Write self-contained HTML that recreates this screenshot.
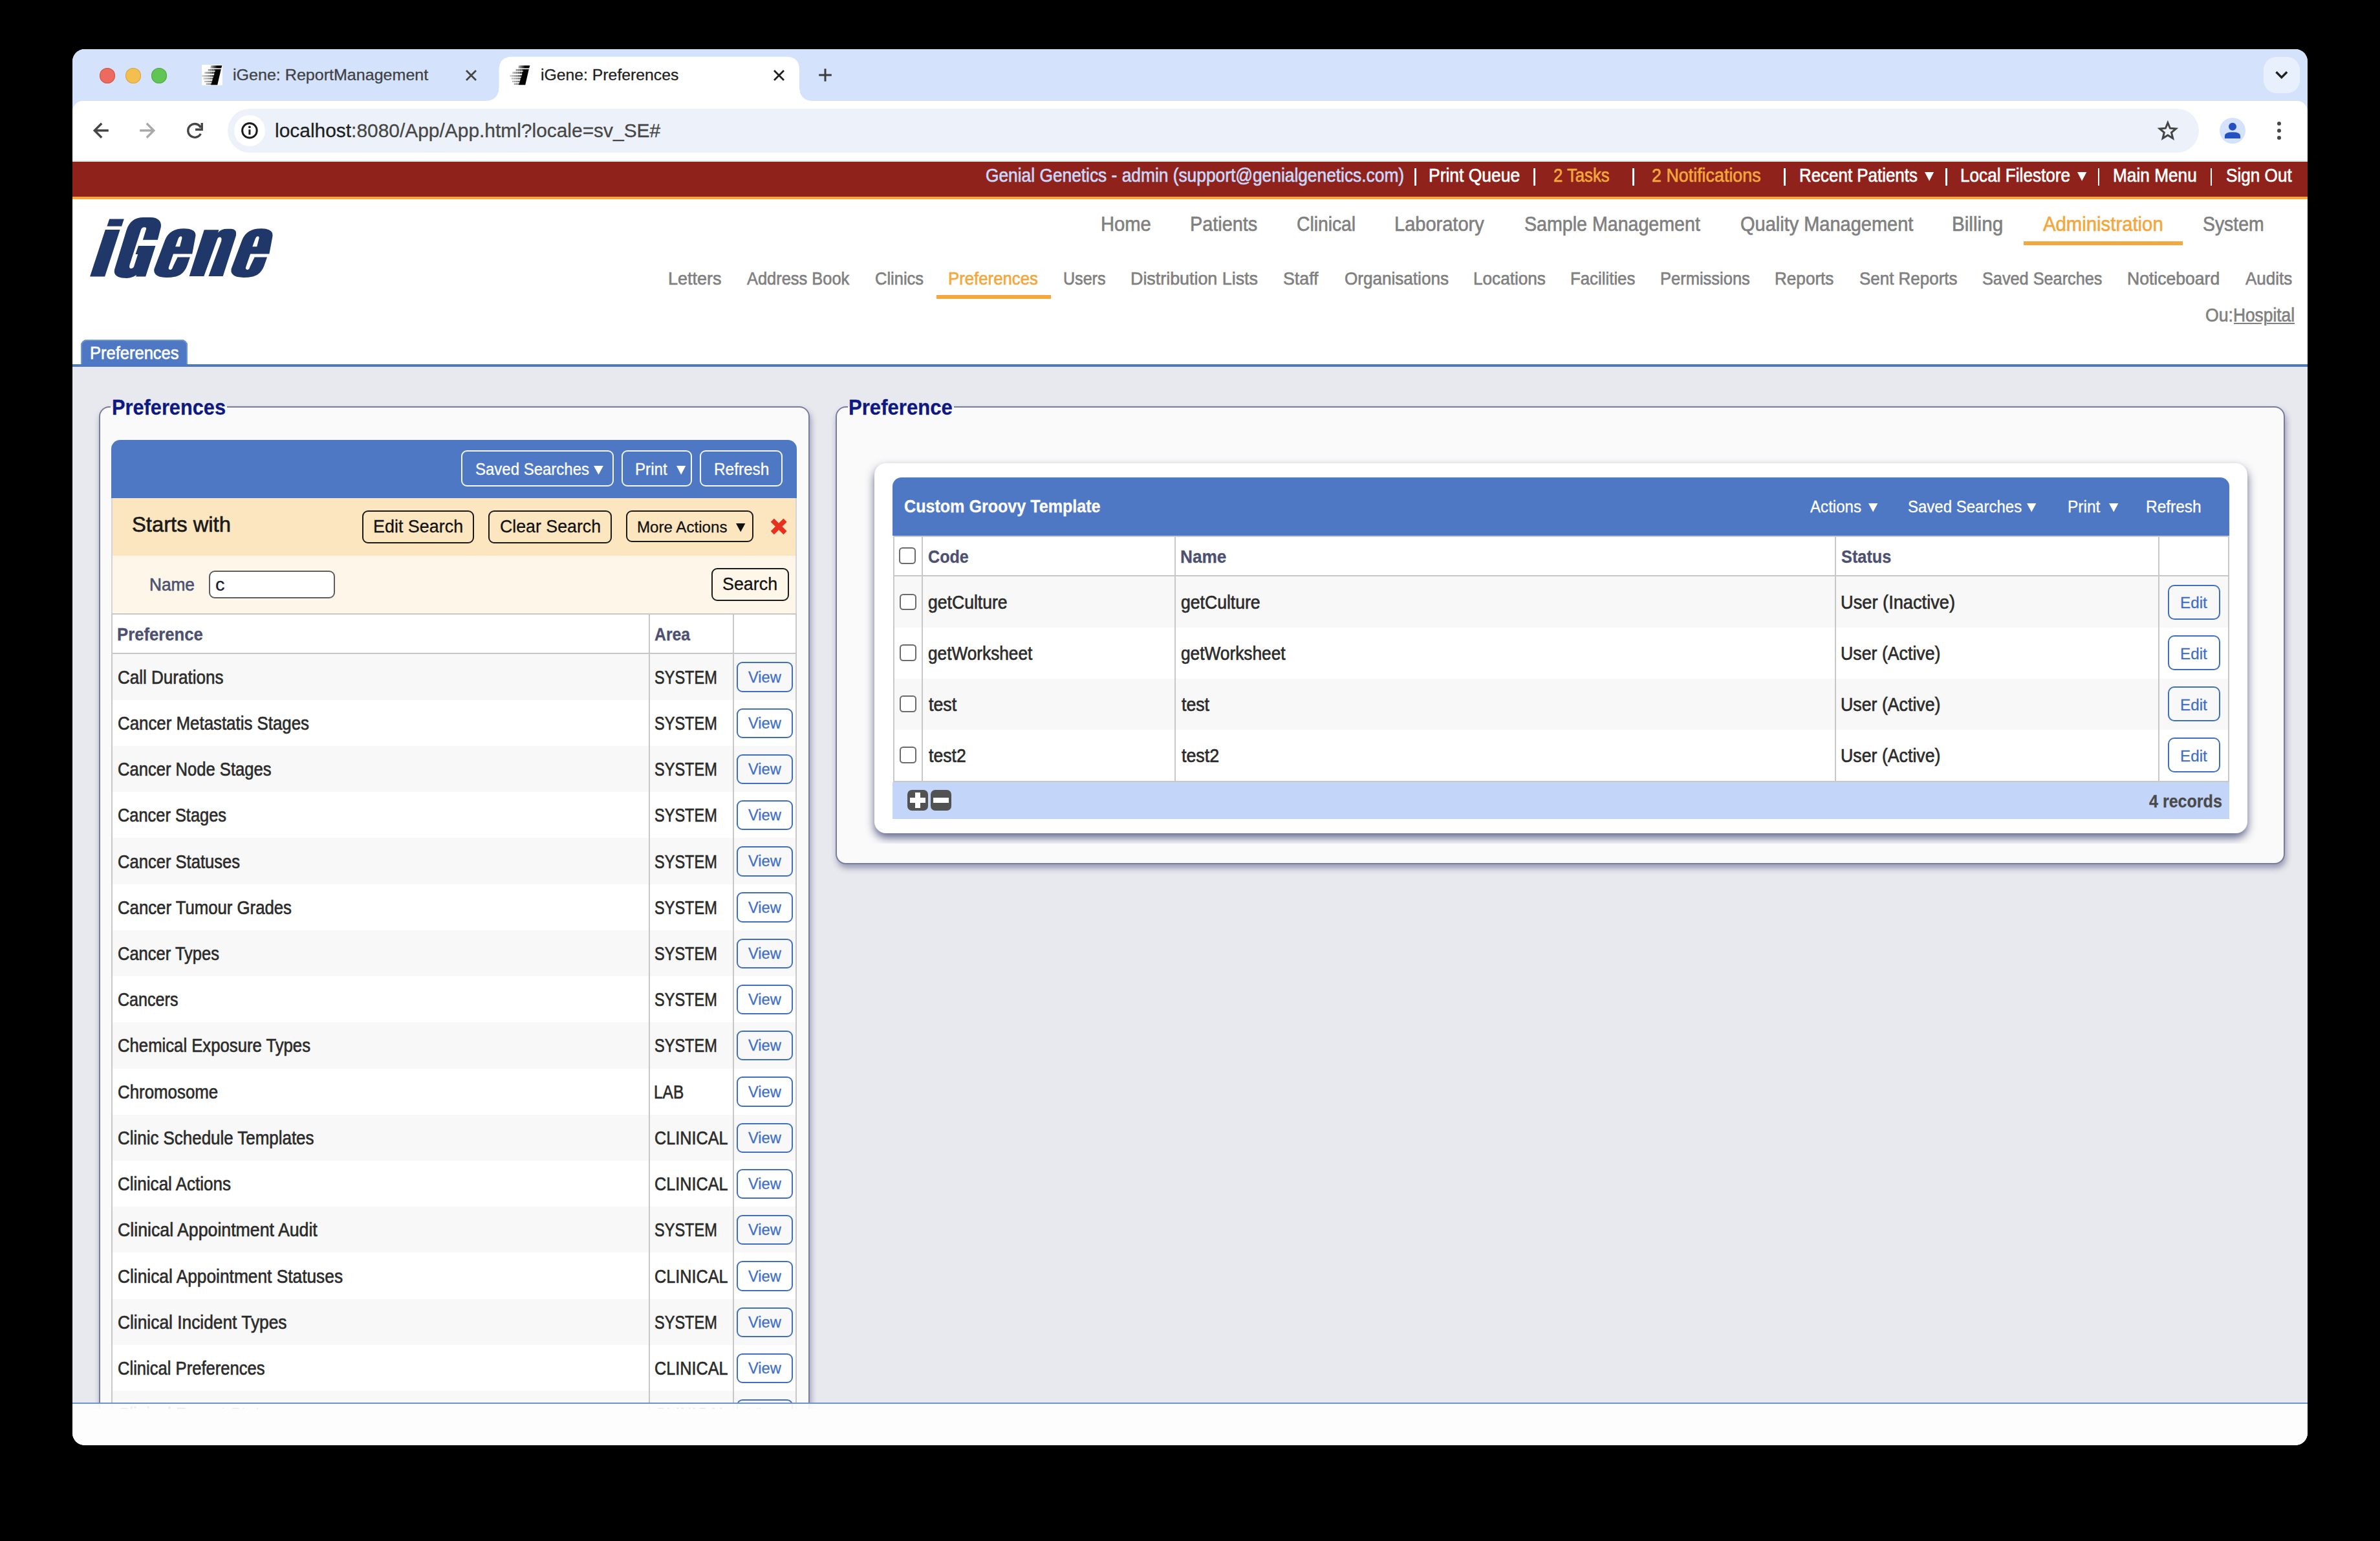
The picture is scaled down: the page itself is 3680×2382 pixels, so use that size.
<!DOCTYPE html>
<html><head><meta charset="utf-8"><title>iGene: Preferences</title><style>
html,body{margin:0;padding:0;background:#000;}
body{width:3680px;height:2382px;position:relative;overflow:hidden;font-family:"Liberation Sans",sans-serif;}
#w{position:absolute;left:0;top:0;width:3680px;height:2382px;clip-path:inset(76px 112px 148px 112px round 19px);background:#fff;}
#w div,#w svg{position:absolute;}
#w svg{overflow:visible;}
.t{white-space:nowrap;line-height:1;transform-origin:0 50%;-webkit-text-stroke:0.3px currentColor;}
</style></head><body><div id="w">
<div style="left:112px;top:76px;width:3456px;height:100px;background:#d4e2fc"></div>
<svg style="left:740px;top:80px" width="530" height="80" viewBox="740 80 530 80">
<path d="M750,156 Q771.6,156 771.6,134 L771.6,108 Q771.6,87.7 792,87.7 L1216,87.7 Q1236,87.7 1236,108 L1236,134 Q1236,156 1258,156 Z" fill="#fff"/></svg>
<div style="left:112px;top:155.5px;width:3456px;height:93px;background:#fff;border-radius:16px 16px 0 0"></div>
<div style="left:112px;top:248px;width:3456px;height:2px;background:#e3e9e8"></div>
<div style="left:154px;top:104.8px;width:24px;height:24px;background:#ed6a5e;border-radius:50%;box-shadow:inset 0 0 0 1px #d05549"></div>
<div style="left:194px;top:104.8px;width:24px;height:24px;background:#f5bf4f;border-radius:50%;box-shadow:inset 0 0 0 1px #d6a243"></div>
<div style="left:234px;top:104.8px;width:24px;height:24px;background:#61c554;border-radius:50%;box-shadow:inset 0 0 0 1px #52a73f"></div>
<svg style="left:312px;top:100px" width="32" height="32" viewBox="0 0 32 32"><defs><linearGradient id="fg1" gradientUnits="userSpaceOnUse" x1="0" x2="22" y1="0" y2="0"><stop offset="0" stop-color="#000" stop-opacity="0.15"/><stop offset=".5" stop-color="#000" stop-opacity=".45"/><stop offset="1" stop-color="#000" stop-opacity=".9"/></linearGradient><linearGradient id="fg1d" gradientUnits="userSpaceOnUse" x1="13" x2="24" y1="0" y2="0"><stop offset="0" stop-color="#000" stop-opacity="0.25"/><stop offset="1" stop-color="#000" stop-opacity="1"/></linearGradient></defs><rect width="32" height="31.6" fill="#fff"/><rect x="9.5" y="7" width="12.8" height="2.5" fill="url(#fg1)"/><rect x="4.5" y="11" width="16.7" height="3" fill="url(#fg1)"/><rect x="0.3" y="16" width="19.5" height="2.8" fill="url(#fg1)"/><rect x="2.3" y="20.3" width="16.3" height="2.3" fill="url(#fg1)"/><rect x="4" y="24.8" width="13.2" height="2.3" fill="url(#fg1)"/><rect x="6.5" y="28.6" width="9.5" height="2.4" fill="url(#fg1)"/><rect x="3.2" y="6" width="0.6" height="26" fill="#fff" opacity=".55"/><rect x="6.2" y="6" width="0.6" height="26" fill="#fff" opacity=".55"/><rect x="9.2" y="6" width="0.6" height="26" fill="#fff" opacity=".55"/><rect x="12.2" y="6" width="0.6" height="26" fill="#fff" opacity=".55"/><rect x="15.2" y="6" width="0.6" height="26" fill="#fff" opacity=".55"/><rect x="18.2" y="6" width="0.6" height="26" fill="#fff" opacity=".55"/><polygon points="14.2,1.2 31.4,1.2 30.2,5.6 13,5.6" fill="url(#fg1d)"/><polygon points="21.6,7 29.8,7 24.2,31.3 14.1,31.3" fill="#050505"/></svg>
<svg style="left:788.4px;top:100px" width="32" height="32" viewBox="0 0 32 32"><defs><linearGradient id="fg2" gradientUnits="userSpaceOnUse" x1="0" x2="22" y1="0" y2="0"><stop offset="0" stop-color="#000" stop-opacity="0.15"/><stop offset=".5" stop-color="#000" stop-opacity=".45"/><stop offset="1" stop-color="#000" stop-opacity=".9"/></linearGradient><linearGradient id="fg2d" gradientUnits="userSpaceOnUse" x1="13" x2="24" y1="0" y2="0"><stop offset="0" stop-color="#000" stop-opacity="0.25"/><stop offset="1" stop-color="#000" stop-opacity="1"/></linearGradient></defs><rect x="9.5" y="7" width="12.8" height="2.5" fill="url(#fg2)"/><rect x="4.5" y="11" width="16.7" height="3" fill="url(#fg2)"/><rect x="0.3" y="16" width="19.5" height="2.8" fill="url(#fg2)"/><rect x="2.3" y="20.3" width="16.3" height="2.3" fill="url(#fg2)"/><rect x="4" y="24.8" width="13.2" height="2.3" fill="url(#fg2)"/><rect x="6.5" y="28.6" width="9.5" height="2.4" fill="url(#fg2)"/><rect x="3.2" y="6" width="0.6" height="26" fill="#fff" opacity=".55"/><rect x="6.2" y="6" width="0.6" height="26" fill="#fff" opacity=".55"/><rect x="9.2" y="6" width="0.6" height="26" fill="#fff" opacity=".55"/><rect x="12.2" y="6" width="0.6" height="26" fill="#fff" opacity=".55"/><rect x="15.2" y="6" width="0.6" height="26" fill="#fff" opacity=".55"/><rect x="18.2" y="6" width="0.6" height="26" fill="#fff" opacity=".55"/><polygon points="14.2,1.2 31.4,1.2 30.2,5.6 13,5.6" fill="url(#fg2d)"/><polygon points="21.6,7 29.8,7 24.2,31.3 14.1,31.3" fill="#050505"/></svg>
<div class="t" style="left:359.52px;top:103.63px;font-size:24.6px;color:#3f4144;transform:scaleX(1.0188);">iGene: ReportManagement</div>
<div class="t" style="left:835.84px;top:104.03px;font-size:24.6px;color:#1f1f1f;transform:scaleX(1.0069);">iGene: Preferences</div>
<svg style="left:718.5px;top:107px" width="19" height="19" viewBox="-9.5 -9.5 19 19"><path d="M-7.5,-7.5 L7.5,7.5 M7.5,-7.5 L-7.5,7.5" stroke="#444" stroke-width="2.8" fill="none"/></svg>
<svg style="left:1194.5px;top:106.9px" width="19" height="19" viewBox="-9.5 -9.5 19 19"><path d="M-7.5,-7.5 L7.5,7.5 M7.5,-7.5 L-7.5,7.5" stroke="#1f1f1f" stroke-width="2.8" fill="none"/></svg>
<svg style="left:1262px;top:102px" width="28" height="28" viewBox="-14 -14 28 28"><path d="M-9.8,0 H9.8 M0,-9.8 V9.8" stroke="#3c3c3c" stroke-width="3" fill="none"/></svg>
<div style="left:3500px;top:88px;width:56px;height:56px;background:#e9f0fd;border-radius:20px"></div>
<svg style="left:3512px;top:100px" width="32" height="32" viewBox="3512 100 32 32"><path d="M3519.5,111.3 L3527.8,119.6 L3536.2,111.3" stroke="#1f1f1f" stroke-width="3.4" fill="none"/></svg>
<svg style="left:140px;top:186px" width="32" height="32" viewBox="140 186 32 32"><path d="M167.8,201.8 H146 M157.2,190.8 L146.2,201.8 L157.2,212.8" stroke="#454545" stroke-width="3.4" fill="none"/></svg>
<svg style="left:212px;top:186px" width="32" height="32" viewBox="212 186 32 32"><path d="M216.2,201.8 H238 M226.8,190.8 L237.8,201.8 L226.8,212.8" stroke="#a9a9a9" stroke-width="3.4" fill="none"/></svg>
<svg style="left:284px;top:186px" width="34" height="34" viewBox="284 186 34 34"><path d="M310.4,197.2 A10.4,10.4 0 1 0 310.3,206.8" stroke="#454545" stroke-width="3.4" fill="none"/><path d="M312.2,190 V200.2 H302" stroke="#454545" stroke-width="3.4" fill="none"/></svg>
<div style="left:352.3px;top:168.2px;width:3047.5px;height:67.6px;background:#edf2fa;border-radius:34px"></div>
<div style="left:362.2px;top:178.2px;width:47.6px;height:47.6px;background:#fff;border-radius:50%"></div>
<svg style="left:370px;top:186px" width="32" height="32" viewBox="370 186 32 32"><circle cx="385.9" cy="201.8" r="11.3" stroke="#1a1a1a" stroke-width="3" fill="none"/><rect x="384.4" y="200.2" width="3" height="8" fill="#1a1a1a"/><circle cx="385.9" cy="196.3" r="1.9" fill="#1a1a1a"/></svg>
<div class="t" style="left:425.21px;top:188.06px;font-size:28.7px;color:#1f1f1f;transform:scaleX(1.0428);">localhost<span style="color:#474747">:8080/App/App.html?locale=sv_SE#</span></div>
<svg style="left:3334px;top:184px" width="36" height="36" viewBox="3334 184 36 36"><polygon points="3351.9,189.7 3355.4,198.2 3364.5,198.9 3357.5,204.8 3359.7,213.8 3351.9,208.9 3344.1,213.8 3346.3,204.8 3339.3,198.9 3348.4,198.2" stroke="#454545" stroke-width="3" fill="none" stroke-linejoin="miter"/></svg>
<div style="left:3432px;top:182px;width:40px;height:40px;background:#d4e2fc;border-radius:50%"></div>
<svg style="left:3432px;top:182px" width="40" height="40" viewBox="3432 182 40 40"><circle cx="3452" cy="195.7" r="6" fill="#2550c2"/><path d="M3439.9,214 V210 Q3439.9,204.2 3452,204.2 Q3464.1,204.2 3464.1,210 V214 Z" fill="#2550c2"/></svg>
<div style="left:3520.8px;top:187.8px;width:6.2px;height:6.2px;background:#474747;border-radius:50%"></div>
<div style="left:3520.8px;top:198.9px;width:6.2px;height:6.2px;background:#474747;border-radius:50%"></div>
<div style="left:3520.8px;top:209.9px;width:6.2px;height:6.2px;background:#474747;border-radius:50%"></div>
<div style="left:112px;top:250px;width:3456px;height:53.6px;background:#8f231c"></div>
<div style="left:112px;top:303.6px;width:3456px;height:4.4px;background:#f3a73c"></div>
<div class="t" style="left:1524.18px;top:256.91px;font-size:28.6px;color:#c9d9fb;transform:scaleX(0.9206);-webkit-text-stroke-width:0.65px;">Genial Genetics - admin (support@genialgenetics.com)</div>
<div style="left:2187.2px;top:259.5px;width:2.8px;height:27px;background:#fff"></div>
<div style="left:2371.2px;top:259.5px;width:2.8px;height:27px;background:#fff"></div>
<div style="left:2524.2px;top:259.5px;width:2.8px;height:27px;background:#fff"></div>
<div style="left:2758.2px;top:259.5px;width:2.8px;height:27px;background:#fff"></div>
<div style="left:3008.2px;top:259.5px;width:2.8px;height:27px;background:#fff"></div>
<div style="left:3243.7px;top:259.5px;width:2.8px;height:27px;background:#fff"></div>
<div style="left:3417.7px;top:259.5px;width:2.8px;height:27px;background:#fff"></div>
<div class="t" style="left:2208.68px;top:256.91px;font-size:28.6px;color:#fff;transform:scaleX(0.9251);-webkit-text-stroke-width:0.65px;">Print Queue</div>
<div class="t" style="left:2401.51px;top:256.91px;font-size:28.6px;color:#f3a73c;transform:scaleX(0.8981);-webkit-text-stroke-width:0.65px;">2 Tasks</div>
<div class="t" style="left:2553.96px;top:256.91px;font-size:28.6px;color:#f3a73c;transform:scaleX(0.9392);-webkit-text-stroke-width:0.65px;">2 Notifications</div>
<div class="t" style="left:2781.72px;top:256.91px;font-size:28.6px;color:#fff;transform:scaleX(0.9060);-webkit-text-stroke-width:0.65px;">Recent Patients</div>
<svg style="left:2976.3px;top:265.8px" width="14.2" height="13.8" viewBox="0 0 14.2 13.8"><polygon points="0,0 14.2,0 7.1,13.8" fill="#fff"/></svg>
<div class="t" style="left:3030.70px;top:256.91px;font-size:28.6px;color:#fff;transform:scaleX(0.9150);-webkit-text-stroke-width:0.65px;">Local Filestore</div>
<svg style="left:3211.7px;top:265.8px" width="14.3" height="13.8" viewBox="0 0 14.3 13.8"><polygon points="0,0 14.3,0 7.15,13.8" fill="#fff"/></svg>
<div class="t" style="left:3267.20px;top:256.91px;font-size:28.6px;color:#fff;transform:scaleX(0.9172);-webkit-text-stroke-width:0.65px;">Main Menu</div>
<div class="t" style="left:3441.62px;top:256.91px;font-size:28.6px;color:#fff;transform:scaleX(0.9142);-webkit-text-stroke-width:0.65px;">Sign Out</div>
<div class="t" style="left:1702.18px;top:330.86px;font-size:30.5px;color:#808080;transform:scaleX(0.9561);-webkit-text-stroke-width:0.65px;">Home</div>
<div class="t" style="left:1839.50px;top:330.86px;font-size:30.5px;color:#808080;transform:scaleX(0.9454);-webkit-text-stroke-width:0.65px;">Patients</div>
<div class="t" style="left:2004.89px;top:330.86px;font-size:30.5px;color:#808080;transform:scaleX(0.9270);-webkit-text-stroke-width:0.65px;">Clinical</div>
<div class="t" style="left:2155.99px;top:330.86px;font-size:30.5px;color:#808080;transform:scaleX(0.9511);-webkit-text-stroke-width:0.65px;">Laboratory</div>
<div class="t" style="left:2356.52px;top:330.86px;font-size:30.5px;color:#808080;transform:scaleX(0.9376);-webkit-text-stroke-width:0.65px;">Sample Management</div>
<div class="t" style="left:2690.50px;top:330.86px;font-size:30.5px;color:#808080;transform:scaleX(0.9499);-webkit-text-stroke-width:0.65px;">Quality Management</div>
<div class="t" style="left:3018.44px;top:330.86px;font-size:30.5px;color:#808080;transform:scaleX(0.9724);-webkit-text-stroke-width:0.65px;">Billing</div>
<div class="t" style="left:3159.31px;top:330.86px;font-size:30.5px;color:#f3a73c;transform:scaleX(0.9611);-webkit-text-stroke-width:0.65px;">Administration</div>
<div class="t" style="left:3405.53px;top:330.86px;font-size:30.5px;color:#808080;transform:scaleX(0.9296);-webkit-text-stroke-width:0.65px;">System</div>
<div style="left:3129px;top:373px;width:246.3px;height:5.6px;background:#f3a73c"></div>
<div class="t" style="left:1033.16px;top:417.02px;font-size:28px;color:#808080;transform:scaleX(0.9634);-webkit-text-stroke-width:0.65px;">Letters</div>
<div class="t" style="left:1155.30px;top:417.02px;font-size:28px;color:#808080;transform:scaleX(0.9083);-webkit-text-stroke-width:0.65px;">Address Book</div>
<div class="t" style="left:1353.02px;top:417.02px;font-size:28px;color:#808080;transform:scaleX(0.9103);-webkit-text-stroke-width:0.65px;">Clinics</div>
<div class="t" style="left:1466.24px;top:417.02px;font-size:28px;color:#f3a73c;transform:scaleX(0.9198);-webkit-text-stroke-width:0.65px;">Preferences</div>
<div class="t" style="left:1644.31px;top:417.02px;font-size:28px;color:#808080;transform:scaleX(0.8954);-webkit-text-stroke-width:0.65px;">Users</div>
<div class="t" style="left:1748.16px;top:417.02px;font-size:28px;color:#808080;transform:scaleX(0.9589);-webkit-text-stroke-width:0.65px;">Distribution Lists</div>
<div class="t" style="left:1984.11px;top:417.02px;font-size:28px;color:#808080;transform:scaleX(0.9550);-webkit-text-stroke-width:0.65px;">Staff</div>
<div class="t" style="left:2078.63px;top:417.02px;font-size:28px;color:#808080;transform:scaleX(0.9318);-webkit-text-stroke-width:0.65px;">Organisations</div>
<div class="t" style="left:2278.21px;top:417.02px;font-size:28px;color:#808080;transform:scaleX(0.9335);-webkit-text-stroke-width:0.65px;">Locations</div>
<div class="t" style="left:2428.24px;top:417.02px;font-size:28px;color:#808080;transform:scaleX(0.9215);-webkit-text-stroke-width:0.65px;">Facilities</div>
<div class="t" style="left:2566.76px;top:417.02px;font-size:28px;color:#808080;transform:scaleX(0.9105);-webkit-text-stroke-width:0.65px;">Permissions</div>
<div class="t" style="left:2744.21px;top:417.02px;font-size:28px;color:#808080;transform:scaleX(0.9322);-webkit-text-stroke-width:0.65px;">Reports</div>
<div class="t" style="left:2874.63px;top:417.02px;font-size:28px;color:#808080;transform:scaleX(0.9269);-webkit-text-stroke-width:0.65px;">Sent Reports</div>
<div class="t" style="left:3065.16px;top:417.02px;font-size:28px;color:#808080;transform:scaleX(0.9025);-webkit-text-stroke-width:0.65px;">Saved Searches</div>
<div class="t" style="left:3288.68px;top:417.02px;font-size:28px;color:#808080;transform:scaleX(0.9484);-webkit-text-stroke-width:0.65px;">Noticeboard</div>
<div class="t" style="left:3471.80px;top:417.02px;font-size:28px;color:#808080;transform:scaleX(0.9291);-webkit-text-stroke-width:0.65px;">Audits</div>
<div style="left:1448px;top:456px;width:176.8px;height:6px;background:#f3a73c"></div>
<div class="t" style="left:3410.20px;top:472.61px;font-size:28.6px;color:#808080;transform:scaleX(0.9307);-webkit-text-stroke-width:0.65px;">Ou:</div>
<div class="t" style="left:3453.19px;top:472.61px;font-size:28.6px;color:#808080;transform:scaleX(0.9196);-webkit-text-stroke-width:0.65px;">Hospital</div>
<div style="left:3454px;top:499px;width:42.8px;height:2px;background:#808080"></div>
<div style="left:3505.2px;top:499px;width:42.7px;height:2px;background:#808080"></div>
<svg style="left:130px;top:325px" width="310" height="115" viewBox="130 325 310 115"><g fill="#20376a">
<g transform="translate(130,325) scale(0.074627)">
<polygon points="525,180 828,180 778,332 475,332"/>
<polygon points="440,403 745,403 430,1372 122,1372"/>
<path d="M630,1230 L880,410 C935,240 1050,148 1230,148 L1380,148 C1530,148 1612,230 1592,350 L1525,612 L1218,612 L1288,385 Q1295,350 1245,352 Q1200,355 1180,400 L945,1130 Q925,1210 975,1207 Q1020,1205 1035,1160 L1115,910 L1065,910 L1125,738 L1480,738 L1275,1372 L1075,1372 L1085,1340 C1000,1400 900,1410 830,1405 C700,1400 605,1340 630,1230 Z"/>
</g>
<g transform="translate(230,340) scale(0.084034)">
<path fill-rule="evenodd" d="M650,158 C770,158 880,195 860,300 L800,625 L452,625 L368,870 Q355,915 400,915 Q432,912 445,860 L530,683 L760,683 L720,800 Q660,1000 500,1040 Q330,1075 200,1045 Q80,1000 100,900 L300,370 Q380,158 650,158 Z M585,300 Q618,298 612,335 L572,490 L490,490 L545,340 Q558,302 585,300 Z"/>
<path d="M1020,180 L1290,180 L1275,235 Q1330,165 1440,165 L1520,165 Q1625,170 1605,290 L1365,1035 L1100,1035 L1335,390 Q1350,320 1310,315 Q1275,315 1262,350 L1015,1035 L745,1035 Z"/>
<path fill-rule="evenodd" transform="translate(1418,0)" d="M650,158 C770,158 880,195 860,300 L800,625 L452,625 L368,870 Q355,915 400,915 Q432,912 445,860 L530,683 L760,683 L720,800 Q660,1000 500,1040 Q330,1075 200,1045 Q80,1000 100,900 L300,370 Q380,158 650,158 Z M585,300 Q618,298 612,335 L572,490 L490,490 L545,340 Q558,302 585,300 Z"/>
</g></g></svg>

<div style="left:125px;top:525px;width:165px;height:42px;background:#4e78c4;border-radius:9px 9px 0 0;box-shadow:inset 0 2px 0 #6d96cf, inset 2px 0 0 #6d96cf, inset -2px 0 0 #6d96cf"></div>
<div style="left:112px;top:563px;width:3456px;height:4px;background:#4e78c4"></div>
<div class="t" style="left:138.96px;top:532.17px;font-size:27.5px;color:#fff;transform:scaleX(0.9275);-webkit-text-stroke-width:0.65px;">Preferences</div>
<div style="left:112px;top:567px;width:3456px;height:1620px;background:#e8e9ee"></div>
<div style="left:152.5px;top:628.2px;width:1099.3px;height:1700.4px;background:#fafafa;border:2px solid #787d9f;border-radius:16px;box-sizing:border-box;box-shadow:2px 6px 10px rgba(62,68,118,.48)"></div>
<div style="left:171px;top:620px;width:179.5px;height:20px;background:linear-gradient(#e8e9ee 0,#e8e9ee 9.5px,#fafafa 9.5px)"></div>
<div class="t" style="left:173.04px;top:613.70px;font-size:32.6px;color:#0e1882;font-weight:700;transform:scaleX(0.9435);">Preferences</div>
<div style="left:172px;top:680px;width:1060px;height:90px;background:#4e78c4;border-radius:14px 14px 0 0"></div>
<div style="left:713.2px;top:696.3px;width:235.5px;height:55.6px;border:2px solid #f2f5fb;background:transparent;border-radius:9px;box-sizing:border-box"></div>
<div style="left:961.4px;top:696.3px;width:108.2px;height:55.6px;border:2px solid #f2f5fb;background:transparent;border-radius:9px;box-sizing:border-box"></div>
<div style="left:1082.3px;top:696.3px;width:127.5px;height:55.6px;border:2px solid #f2f5fb;background:transparent;border-radius:9px;box-sizing:border-box"></div>
<div class="t" style="left:734.56px;top:712.72px;font-size:25px;color:#fff;transform:scaleX(0.9595);">Saved Searches</div>
<svg style="left:917.5px;top:719.8px" width="14.9" height="13.7" viewBox="0 0 14.9 13.7"><polygon points="0,0 14.9,0 7.45,13.7" fill="#fff"/></svg>
<div class="t" style="left:982.31px;top:712.72px;font-size:25px;color:#fff;transform:scaleX(0.9663);">Print</div>
<svg style="left:1045.7px;top:719.8px" width="14.3" height="13.7" viewBox="0 0 14.3 13.7"><polygon points="0,0 14.3,0 7.15,13.7" fill="#fff"/></svg>
<div class="t" style="left:1103.80px;top:712.72px;font-size:25px;color:#fff;transform:scaleX(0.9744);">Refresh</div>
<div style="left:172px;top:770px;width:1060px;height:89px;background:#fce6bf"></div>
<div style="left:172px;top:859px;width:1060px;height:89px;background:#fef6e9"></div>
<div style="left:172px;top:770px;width:2px;height:178px;background:#d6d3d6"></div>
<div style="left:1230px;top:770px;width:2px;height:178px;background:#d6d3d6"></div>
<div class="t" style="left:204.14px;top:792.90px;font-size:34px;color:#1a1a1a;transform:scaleX(0.9636);-webkit-text-stroke-width:0.65px;">Starts with</div>
<div style="left:560.2px;top:788.5px;width:172.4px;height:51.2px;border:2px solid #1a1a1a;background:transparent;border-radius:9px;box-sizing:border-box"></div>
<div style="left:755.1px;top:788.5px;width:190.5px;height:51px;border:2px solid #1a1a1a;background:transparent;border-radius:9px;box-sizing:border-box"></div>
<div style="left:968.3px;top:788.5px;width:197.1px;height:49.9px;border:2px solid #1a1a1a;background:transparent;border-radius:9px;box-sizing:border-box"></div>
<div class="t" style="left:576.89px;top:799.72px;font-size:27.6px;color:#111;transform:scaleX(0.9756);">Edit Search</div>
<div class="t" style="left:772.61px;top:799.72px;font-size:27.6px;color:#111;transform:scaleX(0.9690);">Clear Search</div>
<div class="t" style="left:984.72px;top:802.53px;font-size:24.8px;color:#111;transform:scaleX(0.9731);">More Actions</div>
<svg style="left:1137.9px;top:808.9px" width="14.4" height="13.2" viewBox="0 0 14.4 13.2"><polygon points="0,0 14.4,0 7.2,13.2" fill="#111"/></svg>
<svg style="left:1188px;top:798px" width="32" height="32" viewBox="1188 798 32 32"><path d="M1194.3,804.2 L1214,823.7 M1214,804.2 L1194.3,823.7" stroke="#e8301f" stroke-width="7.4" fill="none"/></svg>
<div class="t" style="left:231.21px;top:889.97px;font-size:27.5px;color:#4b5272;transform:scaleX(0.9531);-webkit-text-stroke-width:0.65px;">Name</div>
<div style="left:322.5px;top:881.5px;width:195.4px;height:43.1px;border:2px solid #5e5e5e;background:#fff;border-radius:9px;box-sizing:border-box"></div>
<div class="t" style="left:333.33px;top:889.97px;font-size:27.5px;color:#1a1a2e;transform:scaleX(1.0497);">c</div>
<div style="left:1099.5px;top:877.5px;width:120px;height:51px;border:2px solid #1a1a1a;background:transparent;border-radius:9px;box-sizing:border-box"></div>
<div class="t" style="left:1117.44px;top:888.62px;font-size:27.6px;color:#111;transform:scaleX(0.9736);">Search</div>
<div style="left:172px;top:948px;width:1060px;height:1300px;background:#fff"></div>
<div style="left:174px;top:1010.5px;width:1056px;height:71.23px;background:#f8f8f8"></div>
<div style="left:174px;top:1152.96px;width:1056px;height:71.23px;background:#f8f8f8"></div>
<div style="left:174px;top:1295.42px;width:1056px;height:71.23px;background:#f8f8f8"></div>
<div style="left:174px;top:1437.88px;width:1056px;height:71.23px;background:#f8f8f8"></div>
<div style="left:174px;top:1580.34px;width:1056px;height:71.23px;background:#f8f8f8"></div>
<div style="left:174px;top:1722.8px;width:1056px;height:71.23px;background:#f8f8f8"></div>
<div style="left:174px;top:1865.26px;width:1056px;height:71.23px;background:#f8f8f8"></div>
<div style="left:174px;top:2007.72px;width:1056px;height:71.23px;background:#f8f8f8"></div>
<div style="left:174px;top:2150.18px;width:1056px;height:71.23px;background:#f8f8f8"></div>
<div class="t" style="left:181.59px;top:1032.61px;font-size:28.6px;color:#2b2b2b;transform:scaleX(0.9100);-webkit-text-stroke-width:0.65px;">Call Durations</div>
<div class="t" style="left:1012.21px;top:1032.61px;font-size:28.6px;color:#2b2b2b;transform:scaleX(0.8235);-webkit-text-stroke-width:0.65px;">SYSTEM</div>
<div style="left:1139.2px;top:1023.3px;width:86.4px;height:46.3px;border:2px solid #3f6fc4;background:transparent;border-radius:9px;box-sizing:border-box"></div>
<div class="t" style="left:1157.08px;top:1034.53px;font-size:24.8px;color:#3f6fc4;transform:scaleX(0.9538);">View</div>
<div class="t" style="left:181.60px;top:1103.84px;font-size:28.6px;color:#2b2b2b;transform:scaleX(0.9042);-webkit-text-stroke-width:0.65px;">Cancer Metastatis Stages</div>
<div class="t" style="left:1012.21px;top:1103.84px;font-size:28.6px;color:#2b2b2b;transform:scaleX(0.8235);-webkit-text-stroke-width:0.65px;">SYSTEM</div>
<div style="left:1139.2px;top:1094.53px;width:86.4px;height:46.3px;border:2px solid #3f6fc4;background:transparent;border-radius:9px;box-sizing:border-box"></div>
<div class="t" style="left:1157.08px;top:1105.76px;font-size:24.8px;color:#3f6fc4;transform:scaleX(0.9538);">View</div>
<div class="t" style="left:181.61px;top:1175.07px;font-size:28.6px;color:#2b2b2b;transform:scaleX(0.8947);-webkit-text-stroke-width:0.65px;">Cancer Node Stages</div>
<div class="t" style="left:1012.21px;top:1175.07px;font-size:28.6px;color:#2b2b2b;transform:scaleX(0.8235);-webkit-text-stroke-width:0.65px;">SYSTEM</div>
<div style="left:1139.2px;top:1165.76px;width:86.4px;height:46.3px;border:2px solid #3f6fc4;background:transparent;border-radius:9px;box-sizing:border-box"></div>
<div class="t" style="left:1157.08px;top:1176.99px;font-size:24.8px;color:#3f6fc4;transform:scaleX(0.9538);">View</div>
<div class="t" style="left:181.62px;top:1246.30px;font-size:28.6px;color:#2b2b2b;transform:scaleX(0.8881);-webkit-text-stroke-width:0.65px;">Cancer Stages</div>
<div class="t" style="left:1012.21px;top:1246.30px;font-size:28.6px;color:#2b2b2b;transform:scaleX(0.8235);-webkit-text-stroke-width:0.65px;">SYSTEM</div>
<div style="left:1139.2px;top:1236.99px;width:86.4px;height:46.3px;border:2px solid #3f6fc4;background:transparent;border-radius:9px;box-sizing:border-box"></div>
<div class="t" style="left:1157.08px;top:1248.22px;font-size:24.8px;color:#3f6fc4;transform:scaleX(0.9538);">View</div>
<div class="t" style="left:181.61px;top:1317.53px;font-size:28.6px;color:#2b2b2b;transform:scaleX(0.8940);-webkit-text-stroke-width:0.65px;">Cancer Statuses</div>
<div class="t" style="left:1012.21px;top:1317.53px;font-size:28.6px;color:#2b2b2b;transform:scaleX(0.8235);-webkit-text-stroke-width:0.65px;">SYSTEM</div>
<div style="left:1139.2px;top:1308.22px;width:86.4px;height:46.3px;border:2px solid #3f6fc4;background:transparent;border-radius:9px;box-sizing:border-box"></div>
<div class="t" style="left:1157.08px;top:1319.45px;font-size:24.8px;color:#3f6fc4;transform:scaleX(0.9538);">View</div>
<div class="t" style="left:181.61px;top:1388.76px;font-size:28.6px;color:#2b2b2b;transform:scaleX(0.9003);-webkit-text-stroke-width:0.65px;">Cancer Tumour Grades</div>
<div class="t" style="left:1012.21px;top:1388.76px;font-size:28.6px;color:#2b2b2b;transform:scaleX(0.8235);-webkit-text-stroke-width:0.65px;">SYSTEM</div>
<div style="left:1139.2px;top:1379.45px;width:86.4px;height:46.3px;border:2px solid #3f6fc4;background:transparent;border-radius:9px;box-sizing:border-box"></div>
<div class="t" style="left:1157.08px;top:1390.68px;font-size:24.8px;color:#3f6fc4;transform:scaleX(0.9538);">View</div>
<div class="t" style="left:181.61px;top:1459.99px;font-size:28.6px;color:#2b2b2b;transform:scaleX(0.8925);-webkit-text-stroke-width:0.65px;">Cancer Types</div>
<div class="t" style="left:1012.21px;top:1459.99px;font-size:28.6px;color:#2b2b2b;transform:scaleX(0.8235);-webkit-text-stroke-width:0.65px;">SYSTEM</div>
<div style="left:1139.2px;top:1450.68px;width:86.4px;height:46.3px;border:2px solid #3f6fc4;background:transparent;border-radius:9px;box-sizing:border-box"></div>
<div class="t" style="left:1157.08px;top:1461.91px;font-size:24.8px;color:#3f6fc4;transform:scaleX(0.9538);">View</div>
<div class="t" style="left:181.63px;top:1531.22px;font-size:28.6px;color:#2b2b2b;transform:scaleX(0.8777);-webkit-text-stroke-width:0.65px;">Cancers</div>
<div class="t" style="left:1012.21px;top:1531.22px;font-size:28.6px;color:#2b2b2b;transform:scaleX(0.8235);-webkit-text-stroke-width:0.65px;">SYSTEM</div>
<div style="left:1139.2px;top:1521.91px;width:86.4px;height:46.3px;border:2px solid #3f6fc4;background:transparent;border-radius:9px;box-sizing:border-box"></div>
<div class="t" style="left:1157.08px;top:1533.14px;font-size:24.8px;color:#3f6fc4;transform:scaleX(0.9538);">View</div>
<div class="t" style="left:181.61px;top:1602.45px;font-size:28.6px;color:#2b2b2b;transform:scaleX(0.8986);-webkit-text-stroke-width:0.65px;">Chemical Exposure Types</div>
<div class="t" style="left:1012.21px;top:1602.45px;font-size:28.6px;color:#2b2b2b;transform:scaleX(0.8235);-webkit-text-stroke-width:0.65px;">SYSTEM</div>
<div style="left:1139.2px;top:1593.14px;width:86.4px;height:46.3px;border:2px solid #3f6fc4;background:transparent;border-radius:9px;box-sizing:border-box"></div>
<div class="t" style="left:1157.08px;top:1604.37px;font-size:24.8px;color:#3f6fc4;transform:scaleX(0.9538);">View</div>
<div class="t" style="left:181.60px;top:1673.68px;font-size:28.6px;color:#2b2b2b;transform:scaleX(0.9045);-webkit-text-stroke-width:0.65px;">Chromosome</div>
<div class="t" style="left:1011.32px;top:1673.68px;font-size:28.6px;color:#2b2b2b;transform:scaleX(0.8542);-webkit-text-stroke-width:0.65px;">LAB</div>
<div style="left:1139.2px;top:1664.37px;width:86.4px;height:46.3px;border:2px solid #3f6fc4;background:transparent;border-radius:9px;box-sizing:border-box"></div>
<div class="t" style="left:1157.08px;top:1675.60px;font-size:24.8px;color:#3f6fc4;transform:scaleX(0.9538);">View</div>
<div class="t" style="left:181.60px;top:1744.91px;font-size:28.6px;color:#2b2b2b;transform:scaleX(0.9064);-webkit-text-stroke-width:0.65px;">Clinic Schedule Templates</div>
<div class="t" style="left:1012.03px;top:1744.91px;font-size:28.6px;color:#2b2b2b;transform:scaleX(0.8816);-webkit-text-stroke-width:0.65px;">CLINICAL</div>
<div style="left:1139.2px;top:1735.6px;width:86.4px;height:46.3px;border:2px solid #3f6fc4;background:transparent;border-radius:9px;box-sizing:border-box"></div>
<div class="t" style="left:1157.08px;top:1746.83px;font-size:24.8px;color:#3f6fc4;transform:scaleX(0.9538);">View</div>
<div class="t" style="left:181.59px;top:1816.14px;font-size:28.6px;color:#2b2b2b;transform:scaleX(0.9102);-webkit-text-stroke-width:0.65px;">Clinical Actions</div>
<div class="t" style="left:1012.03px;top:1816.14px;font-size:28.6px;color:#2b2b2b;transform:scaleX(0.8816);-webkit-text-stroke-width:0.65px;">CLINICAL</div>
<div style="left:1139.2px;top:1806.83px;width:86.4px;height:46.3px;border:2px solid #3f6fc4;background:transparent;border-radius:9px;box-sizing:border-box"></div>
<div class="t" style="left:1157.08px;top:1818.06px;font-size:24.8px;color:#3f6fc4;transform:scaleX(0.9538);">View</div>
<div class="t" style="left:181.57px;top:1887.37px;font-size:28.6px;color:#2b2b2b;transform:scaleX(0.9339);-webkit-text-stroke-width:0.65px;">Clinical Appointment Audit</div>
<div class="t" style="left:1012.21px;top:1887.37px;font-size:28.6px;color:#2b2b2b;transform:scaleX(0.8235);-webkit-text-stroke-width:0.65px;">SYSTEM</div>
<div style="left:1139.2px;top:1878.06px;width:86.4px;height:46.3px;border:2px solid #3f6fc4;background:transparent;border-radius:9px;box-sizing:border-box"></div>
<div class="t" style="left:1157.08px;top:1889.29px;font-size:24.8px;color:#3f6fc4;transform:scaleX(0.9538);">View</div>
<div class="t" style="left:181.58px;top:1958.60px;font-size:28.6px;color:#2b2b2b;transform:scaleX(0.9201);-webkit-text-stroke-width:0.65px;">Clinical Appointment Statuses</div>
<div class="t" style="left:1012.03px;top:1958.60px;font-size:28.6px;color:#2b2b2b;transform:scaleX(0.8816);-webkit-text-stroke-width:0.65px;">CLINICAL</div>
<div style="left:1139.2px;top:1949.29px;width:86.4px;height:46.3px;border:2px solid #3f6fc4;background:transparent;border-radius:9px;box-sizing:border-box"></div>
<div class="t" style="left:1157.08px;top:1960.52px;font-size:24.8px;color:#3f6fc4;transform:scaleX(0.9538);">View</div>
<div class="t" style="left:181.58px;top:2029.83px;font-size:28.6px;color:#2b2b2b;transform:scaleX(0.9210);-webkit-text-stroke-width:0.65px;">Clinical Incident Types</div>
<div class="t" style="left:1012.21px;top:2029.83px;font-size:28.6px;color:#2b2b2b;transform:scaleX(0.8235);-webkit-text-stroke-width:0.65px;">SYSTEM</div>
<div style="left:1139.2px;top:2020.52px;width:86.4px;height:46.3px;border:2px solid #3f6fc4;background:transparent;border-radius:9px;box-sizing:border-box"></div>
<div class="t" style="left:1157.08px;top:2031.75px;font-size:24.8px;color:#3f6fc4;transform:scaleX(0.9538);">View</div>
<div class="t" style="left:181.61px;top:2101.06px;font-size:28.6px;color:#2b2b2b;transform:scaleX(0.8947);-webkit-text-stroke-width:0.65px;">Clinical Preferences</div>
<div class="t" style="left:1012.03px;top:2101.06px;font-size:28.6px;color:#2b2b2b;transform:scaleX(0.8816);-webkit-text-stroke-width:0.65px;">CLINICAL</div>
<div style="left:1139.2px;top:2091.75px;width:86.4px;height:46.3px;border:2px solid #3f6fc4;background:transparent;border-radius:9px;box-sizing:border-box"></div>
<div class="t" style="left:1157.08px;top:2102.98px;font-size:24.8px;color:#3f6fc4;transform:scaleX(0.9538);">View</div>
<div class="t" style="left:181.61px;top:2172.29px;font-size:28.6px;color:#2b2b2b;transform:scaleX(0.8979);-webkit-text-stroke-width:0.65px;">Clinical Report Statuses</div>
<div class="t" style="left:1012.03px;top:2172.29px;font-size:28.6px;color:#2b2b2b;transform:scaleX(0.8816);-webkit-text-stroke-width:0.65px;">CLINICAL</div>
<div style="left:1139.2px;top:2162.98px;width:86.4px;height:46.3px;border:2px solid #3f6fc4;background:transparent;border-radius:9px;box-sizing:border-box"></div>
<div class="t" style="left:1157.08px;top:2174.21px;font-size:24.8px;color:#3f6fc4;transform:scaleX(0.9538);">View</div>
<div style="left:172px;top:948px;width:1060px;height:2px;background:#c8c8c8"></div>
<div style="left:172px;top:1009.3px;width:1060px;height:2px;background:#c8c8c8"></div>
<div style="left:172.3px;top:948px;width:2px;height:1300px;background:#c8c8c8"></div>
<div style="left:1003.2px;top:948px;width:2px;height:1300px;background:#c8c8c8"></div>
<div style="left:1133.2px;top:948px;width:2px;height:1300px;background:#c8c8c8"></div>
<div style="left:1230px;top:948px;width:2px;height:1300px;background:#c8c8c8"></div>
<div class="t" style="left:181.07px;top:966.92px;font-size:27.2px;color:#4c5071;font-weight:700;transform:scaleX(0.9452);">Preference</div>
<div class="t" style="left:1012.22px;top:966.92px;font-size:27.2px;color:#4c5071;font-weight:700;transform:scaleX(0.9110);">Area</div>
<div style="left:1292px;top:628.2px;width:2241px;height:707.4px;background:#fafafa;border:2px solid #787d9f;border-radius:16px;box-sizing:border-box;box-shadow:2px 6px 10px rgba(62,68,118,.48)"></div>
<div style="left:1311px;top:620px;width:163.5px;height:20px;background:linear-gradient(#e8e9ee 0,#e8e9ee 9.5px,#fafafa 9.5px)"></div>
<div class="t" style="left:1312.12px;top:613.70px;font-size:32.6px;color:#0e1882;font-weight:700;transform:scaleX(0.9546);">Preference</div>
<div style="left:1296px;top:690px;width:2232px;height:613.8px;overflow:hidden;background:#fafafa">
<div style="left:56px;top:25.6px;width:2123px;height:572.2px;background:#fff;border-radius:18px;box-shadow:0 7px 14px rgba(58,64,112,.8)"></div>
</div>
<div style="left:1380.3px;top:737.8px;width:2066.7px;height:90.5px;background:#4e78c4;border-radius:14px 14px 0 0"></div>
<div class="t" style="left:1397.63px;top:768.77px;font-size:27.5px;color:#fff;font-weight:700;transform:scaleX(0.9127);">Custom Groovy Template</div>
<div class="t" style="left:2799.14px;top:770.72px;font-size:25px;color:#fff;transform:scaleX(0.9643);">Actions</div>
<svg style="left:2889.3px;top:777.5px" width="14.4" height="13.5" viewBox="0 0 14.4 13.5"><polygon points="0,0 14.4,0 7.2,13.5" fill="#fff"/></svg>
<div class="t" style="left:2949.56px;top:770.72px;font-size:25px;color:#fff;transform:scaleX(0.9601);">Saved Searches</div>
<svg style="left:3134.3px;top:777.5px" width="14.4" height="13.5" viewBox="0 0 14.4 13.5"><polygon points="0,0 14.4,0 7.2,13.5" fill="#fff"/></svg>
<div class="t" style="left:3196.69px;top:770.72px;font-size:25px;color:#fff;transform:scaleX(0.9784);">Print</div>
<svg style="left:3260.8px;top:777.5px" width="14.4" height="13.5" viewBox="0 0 14.4 13.5"><polygon points="0,0 14.4,0 7.2,13.5" fill="#fff"/></svg>
<div class="t" style="left:3318.19px;top:770.72px;font-size:25px;color:#fff;transform:scaleX(0.9792);">Refresh</div>
<div style="left:1380.3px;top:828px;width:2066.7px;height:381px;background:#fff"></div>
<div style="left:1382px;top:890.5px;width:2063px;height:79px;background:#f8f8f8"></div>
<div style="left:1382px;top:1048.5px;width:2063px;height:79.5px;background:#f8f8f8"></div>
<div style="left:1381px;top:828px;width:2066px;height:2px;background:#c8c8c8"></div>
<div style="left:1381px;top:889.3px;width:2066px;height:2px;background:#c8c8c8"></div>
<div style="left:1381px;top:1207.2px;width:2066px;height:2px;background:#c8c8c8"></div>
<div style="left:1380.6px;top:828px;width:2px;height:381px;background:#c8c8c8"></div>
<div style="left:1425px;top:828px;width:2px;height:381px;background:#c8c8c8"></div>
<div style="left:1816.2px;top:828px;width:2px;height:381px;background:#c8c8c8"></div>
<div style="left:2837.2px;top:828px;width:2px;height:381px;background:#c8c8c8"></div>
<div style="left:3337.2px;top:828px;width:2px;height:381px;background:#c8c8c8"></div>
<div style="left:3445px;top:828px;width:2px;height:381px;background:#c8c8c8"></div>
<div style="left:1390.2px;top:846.3px;width:25.8px;height:25.6px;border:2px solid #6b6b6b;border-radius:5.5px;background:#fff;box-sizing:border-box"></div>
<div class="t" style="left:1434.93px;top:846.62px;font-size:27.2px;color:#4c5071;font-weight:700;transform:scaleX(0.9236);">Code</div>
<div class="t" style="left:1825.44px;top:846.62px;font-size:27.2px;color:#4c5071;font-weight:700;transform:scaleX(0.9626);">Name</div>
<div class="t" style="left:2846.94px;top:846.62px;font-size:27.2px;color:#4c5071;font-weight:700;transform:scaleX(0.9314);">Status</div>
<div style="left:1391px;top:917.7px;width:25.8px;height:25.6px;border:2px solid #6b6b6b;border-radius:5.5px;background:#fff;box-sizing:border-box"></div>
<div class="t" style="left:1435.04px;top:916.91px;font-size:28.6px;color:#2b2b2b;transform:scaleX(0.9294);-webkit-text-stroke-width:0.65px;">getCulture</div>
<div class="t" style="left:1826.24px;top:916.91px;font-size:28.6px;color:#2b2b2b;transform:scaleX(0.9294);-webkit-text-stroke-width:0.65px;">getCulture</div>
<div class="t" style="left:2845.77px;top:916.91px;font-size:28.6px;color:#2b2b2b;transform:scaleX(0.9525);-webkit-text-stroke-width:0.65px;">User (Inactive)</div>
<div style="left:3351.5px;top:903.5px;width:81px;height:54px;border:2px solid #3f6fc4;background:transparent;border-radius:10px;box-sizing:border-box"></div>
<div class="t" style="left:3370.71px;top:920.03px;font-size:24.8px;color:#3f6fc4;transform:scaleX(0.9776);">Edit</div>
<div style="left:1391px;top:996.4px;width:25.8px;height:25.6px;border:2px solid #6b6b6b;border-radius:5.5px;background:#fff;box-sizing:border-box"></div>
<div class="t" style="left:1435.05px;top:995.61px;font-size:28.6px;color:#2b2b2b;transform:scaleX(0.9170);-webkit-text-stroke-width:0.65px;">getWorksheet</div>
<div class="t" style="left:1826.25px;top:995.61px;font-size:28.6px;color:#2b2b2b;transform:scaleX(0.9187);-webkit-text-stroke-width:0.65px;">getWorksheet</div>
<div class="t" style="left:2845.80px;top:995.61px;font-size:28.6px;color:#2b2b2b;transform:scaleX(0.9351);-webkit-text-stroke-width:0.65px;">User (Active)</div>
<div style="left:3351.5px;top:982.2px;width:81px;height:54px;border:2px solid #3f6fc4;background:transparent;border-radius:10px;box-sizing:border-box"></div>
<div class="t" style="left:3370.71px;top:998.73px;font-size:24.8px;color:#3f6fc4;transform:scaleX(0.9776);">Edit</div>
<div style="left:1391px;top:1075.4px;width:25.8px;height:25.6px;border:2px solid #6b6b6b;border-radius:5.5px;background:#fff;box-sizing:border-box"></div>
<div class="t" style="left:1435.70px;top:1074.61px;font-size:28.6px;color:#2b2b2b;transform:scaleX(0.9358);-webkit-text-stroke-width:0.65px;">test</div>
<div class="t" style="left:1826.90px;top:1074.61px;font-size:28.6px;color:#2b2b2b;transform:scaleX(0.9315);-webkit-text-stroke-width:0.65px;">test</div>
<div class="t" style="left:2845.80px;top:1074.61px;font-size:28.6px;color:#2b2b2b;transform:scaleX(0.9351);-webkit-text-stroke-width:0.65px;">User (Active)</div>
<div style="left:3351.5px;top:1061.2px;width:81px;height:54px;border:2px solid #3f6fc4;background:transparent;border-radius:10px;box-sizing:border-box"></div>
<div class="t" style="left:3370.71px;top:1077.73px;font-size:24.8px;color:#3f6fc4;transform:scaleX(0.9776);">Edit</div>
<div style="left:1391px;top:1154.4px;width:25.8px;height:25.6px;border:2px solid #6b6b6b;border-radius:5.5px;background:#fff;box-sizing:border-box"></div>
<div class="t" style="left:1435.70px;top:1153.61px;font-size:28.6px;color:#2b2b2b;transform:scaleX(0.9321);-webkit-text-stroke-width:0.65px;">test2</div>
<div class="t" style="left:1826.90px;top:1153.61px;font-size:28.6px;color:#2b2b2b;transform:scaleX(0.9371);-webkit-text-stroke-width:0.65px;">test2</div>
<div class="t" style="left:2845.80px;top:1153.61px;font-size:28.6px;color:#2b2b2b;transform:scaleX(0.9351);-webkit-text-stroke-width:0.65px;">User (Active)</div>
<div style="left:3351.5px;top:1140.2px;width:81px;height:54px;border:2px solid #3f6fc4;background:transparent;border-radius:10px;box-sizing:border-box"></div>
<div class="t" style="left:3370.71px;top:1156.73px;font-size:24.8px;color:#3f6fc4;transform:scaleX(0.9776);">Edit</div>
<div style="left:1380.3px;top:1209px;width:2066.7px;height:56.7px;background:#c3d6f9"></div>
<div style="left:1403px;top:1221px;width:32px;height:32px;background:#525252;border-radius:7px"></div>
<div style="left:1406.6px;top:1233px;width:24.8px;height:8.2px;background:#fff"></div>
<div style="left:1415px;top:1224.7px;width:8px;height:24.6px;background:#fff"></div>
<div style="left:1439px;top:1221px;width:32px;height:32px;background:#525252;border-radius:7px"></div>
<div style="left:1442.9px;top:1233px;width:24.4px;height:8.2px;background:#fff"></div>
<div class="t" style="left:3322.76px;top:1226.42px;font-size:27px;color:#4a4a4a;font-weight:700;transform:scaleX(0.9283);">4 records</div>
<div style="left:112px;top:2168px;width:3456px;height:2px;background:#6d92d2"></div>
<div style="left:112px;top:2170px;width:3456px;height:8px;background:rgba(253,253,253,.93)"></div>
<div style="left:112px;top:2178px;width:3456px;height:60px;background:#fdfdfd"></div>
</div></body></html>
